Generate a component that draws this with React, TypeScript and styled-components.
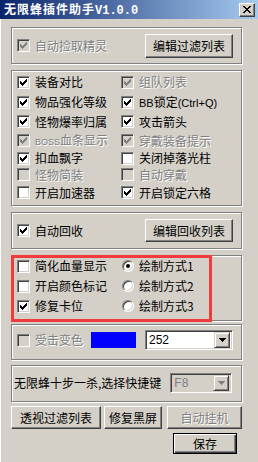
import React from "react";
import styled, { createGlobalStyle, css } from "styled-components";

const GlobalStyle = createGlobalStyle`
  html, body { margin: 0; padding: 0; background: #d4d0c8; }
  body {
    font-family: "Noto Sans CJK SC", "Liberation Sans", sans-serif;
    font-size: 12px;
  }
  * { box-sizing: border-box; }
`;

const BG = "#d4d0c8";

const Window = styled.div`
  width: 258px;
  height: 462px;
  background: ${BG};
  display: flex;
  flex-direction: column;
  overflow: hidden;
`;

const TitleBar = styled.div`
  height: 19px;
  flex: none;
  display: flex;
  align-items: center;
  justify-content: space-between;
  padding: 0 3px 0 4px;
  background: linear-gradient(to right, #0a246a, #a6caf0);
`;

const TitleText = styled.div`
  color: #fff;
  font-weight: bold;
  font-size: 12px;
  line-height: 19px;
  letter-spacing: 1px;
  white-space: nowrap;
`;

const Version = styled.span`
  font-family: "Liberation Mono", "DejaVu Sans Mono", monospace;
  letter-spacing: 0;
`;

const CloseButton = styled.div`
  width: 16px;
  height: 14px;
  display: flex;
  align-items: center;
  justify-content: center;
  background: ${BG};
  border: 1px solid;
  border-color: #fff #404040 #404040 #fff;
  box-shadow: inset -1px -1px #808080;
`;

const Body = styled.div`
  flex: 1;
  display: flex;
  flex-direction: column;
  align-items: flex-start;
  padding: 0 0 0 10px;
  border-left: 1px solid #fff;
`;

const GroupBox = styled.div<{ $h: number; $mt: number; $pt?: number; $pl?: number; $pr?: number }>`
  position: relative;
  width: 231px;
  height: ${(p) => p.$h}px;
  margin-top: ${(p) => p.$mt}px;
  padding: ${(p) => p.$pt ?? 0}px ${(p) => p.$pr ?? 8}px 0 ${(p) => p.$pl ?? 5}px;
  border: 1px solid #808080;
  box-shadow: inset 1px 1px #fff, 1px 1px #fff;
`;

const CenterRow = styled.div`
  height: 100%;
  display: flex;
  align-items: center;
  justify-content: space-between;
`;

const FixedRow = styled.div<{ $h: number }>`
  height: ${(p) => p.$h}px;
  display: flex;
  align-items: center;
`;

const OptionGrid = styled.div<{ $rows: string; $col: number }>`
  display: grid;
  grid-template-columns: ${(p) => p.$col}px 1fr;
  grid-template-rows: ${(p) => p.$rows};
  align-items: center;
`;

const Option = styled.label<{ $disabled?: boolean }>`
  display: flex;
  align-items: center;
  gap: 5px;
  font-size: 12px;
  line-height: 14px;
  white-space: nowrap;
  color: ${(p) => (p.$disabled ? "#808080" : "#000")};
  ${(p) =>
    p.$disabled &&
    css`
      text-shadow: 1px 1px #fff;
    `}
`;

const SmallLatin = styled.span`
  font-family: "Liberation Sans", sans-serif;
  font-size: 9px;
`;

const Latin = styled.span`
  font-family: "Liberation Sans", sans-serif;
  font-size: 11px;
`;

const Box = styled.span<{ $disabled?: boolean }>`
  flex: none;
  width: 13px;
  height: 13px;
  display: flex;
  align-items: center;
  justify-content: center;
  border: 1px solid;
  border-color: #808080 #fff #fff #808080;
  box-shadow: inset 1px 1px #404040, inset -1px -1px ${BG};
  background: ${(p) => (p.$disabled ? BG : "#fff")};
`;

const RadioCircle = styled.span<{ $checked?: boolean }>`
  flex: none;
  width: 12px;
  height: 12px;
  border-radius: 50%;
  display: flex;
  align-items: center;
  justify-content: center;
  border: 1px solid;
  border-color: #808080 #fff #fff #808080;
  box-shadow: inset 1px 1px #404040, inset -1px -1px ${BG};
  background: #fff;
  &::after {
    content: "";
    width: 4px;
    height: 4px;
    border-radius: 50%;
    background: #000;
    display: ${(p) => (p.$checked ? "block" : "none")};
  }
`;

const Button = styled.button<{ $w: number; $h: number; $default?: boolean }>`
  flex: none;
  width: ${(p) => p.$w}px;
  height: ${(p) => p.$h}px;
  padding: 0;
  font-family: "Noto Sans CJK SC", "Liberation Sans", sans-serif;
  font-size: 12px;
  line-height: 14px;
  color: #000;
  background: ${BG};
  border: 1px solid;
  border-color: #fff #404040 #404040 #fff;
  box-shadow: inset -1px -1px #808080;
  &:disabled {
    color: #808080;
    text-shadow: 1px 1px #fff;
  }
  ${(p) =>
    p.$default &&
    css`
      border-color: #000;
      box-shadow: inset 1px 1px #fff, inset -1px -1px #404040, inset -2px -2px #808080;
    `}
`;

const ColorSwatch = styled.div<{ $color: string }>`
  flex: none;
  width: 45px;
  height: 16px;
  background: ${(p) => p.$color};
`;

const Combo = styled.div<{ $w: number; $disabled?: boolean }>`
  flex: none;
  width: ${(p) => p.$w}px;
  height: 20px;
  display: flex;
  align-items: center;
  padding: 2px;
  border: 1px solid;
  border-color: #808080 #fff #fff #808080;
  box-shadow: inset 1px 1px #404040, inset -1px -1px ${BG};
  background: ${(p) => (p.$disabled ? BG : "#fff")};
`;

const ComboText = styled.span<{ $disabled?: boolean }>`
  flex: 1;
  padding-left: 1px;
  font-family: "Liberation Sans", sans-serif;
  font-size: 12px;
  line-height: 14px;
  color: ${(p) => (p.$disabled ? "#808080" : "#000")};
`;

const DropButton = styled.span`
  flex: none;
  width: 16px;
  height: 16px;
  display: flex;
  align-items: center;
  justify-content: center;
  border: 1px solid;
  border-color: ${BG} #404040 #404040 ${BG};
  box-shadow: inset 1px 1px #fff, inset -1px -1px #808080;
  background: ${BG};
`;

const PlainLabel = styled.span`
  font-size: 12px;
  line-height: 14px;
  white-space: nowrap;
  color: #000;
  padding-left: 1px;
`;

const ButtonRow = styled.div<{ $mt: number; $pl: number }>`
  display: flex;
  margin-top: ${(p) => p.$mt}px;
  padding-left: ${(p) => p.$pl}px;
`;

const Gap = styled.span<{ $w: number }>`
  flex: none;
  width: ${(p) => p.$w}px;
`;

const Highlight = styled.div`
  position: absolute;
  left: -1px;
  top: -1px;
  width: 201px;
  height: 67px;
  border: 3px solid #ef3b3b;
  pointer-events: none;
`;

const CHECK_COLS = [2, 3, 4, 3, 2, 1, 0];

function CheckMark({ color }: { color: string }) {
  return (
    <svg width="7" height="7" viewBox="0 0 7 7" shapeRendering="crispEdges">
      {CHECK_COLS.map((y, x) => (
        <rect key={x} x={x} y={y} width="1" height="3" fill={color} />
      ))}
    </svg>
  );
}

function Arrow({ color }: { color: string }) {
  return (
    <svg width="7" height="4" viewBox="0 0 7 4" shapeRendering="crispEdges">
      <path d="M0 0h7v1h-1v1h-1v1h-1v1h-1v-1h-1v-1h-1v-1h-1z" fill={color} />
    </svg>
  );
}

type Opt = { label: React.ReactNode; checked?: boolean; disabled?: boolean };

function Check({ label, checked, disabled }: Opt) {
  return (
    <Option $disabled={disabled}>
      <Box $disabled={disabled}>{checked && <CheckMark color={disabled ? "#808080" : "#000"} />}</Box>
      <span>{label}</span>
    </Option>
  );
}

function Radio({ label, checked }: { label: React.ReactNode; checked?: boolean }) {
  return (
    <Option>
      <RadioCircle $checked={checked} />
      <span>{label}</span>
    </Option>
  );
}

const featureOptions: Opt[] = [
  { label: "装备对比", checked: true },
  { label: "组队列表", checked: true, disabled: true },
  { label: "物品强化等级", checked: true },
  {
    label: (
      <>
        <Latin>BB</Latin>锁定<Latin>(Ctrl+Q)</Latin>
      </>
    ),
    checked: true,
  },
  { label: "怪物爆率归属", checked: true },
  { label: "攻击箭头", checked: true },
  {
    label: (
      <>
        <SmallLatin>BOSS</SmallLatin>血条显示
      </>
    ),
    checked: true,
    disabled: true,
  },
  { label: "穿戴装备提示", checked: true, disabled: true },
  { label: "扣血飘字", checked: true },
  { label: "关闭掉落光柱" },
  { label: "怪物简装", disabled: true },
  { label: "自动穿戴", disabled: true },
  { label: "开启加速器" },
  { label: "开启锁定六格", checked: true },
];

export default function App() {
  return (
    <>
      <GlobalStyle />
      <Window>
        <TitleBar>
          <TitleText>
            无限蜂插件助手<Version>V1.0.0</Version>
          </TitleText>
          <CloseButton>
            <svg width="8" height="7" viewBox="0 0 8 7" shapeRendering="crispEdges">
              <path d="M0 0h2v1h1v1h2v-1h1v-1h2v1h-1v1h-1v1h-1v1h1v1h1v1h1v1h-2v-1h-1v-1h-2v1h-1v1h-2v-1h1v-1h1v-1h1v-1h-1v-1h-1v-1h-1z" fill="#000" />
            </svg>
          </CloseButton>
        </TitleBar>
        <Body>
          <GroupBox $h={37} $mt={8}>
            <CenterRow>
              <Check label="自动捡取精灵" checked disabled />
              <Button $w={88} $h={24}>编辑过滤列表</Button>
            </CenterRow>
          </GroupBox>

          <GroupBox $h={136} $mt={6} $pt={1}>
            <OptionGrid $col={104} $rows="20px 20px 19px 19px 16px 17px 19px">
              {featureOptions.map((o, i) => (
                <Check key={i} {...o} />
              ))}
            </OptionGrid>
          </GroupBox>

          <GroupBox $h={37} $mt={6}>
            <CenterRow>
              <Check label="自动回收" checked />
              <Button $w={88} $h={23}>编辑回收列表</Button>
            </CenterRow>
          </GroupBox>

          <GroupBox $h={66} $mt={6}>
            <OptionGrid $col={105} $rows="20px 20px 20px">
              <Check label="简化血量显示" />
              <Radio label="绘制方式1" checked />
              <Check label="开启颜色标记" />
              <Radio label="绘制方式2" />
              <Check label="修复卡位" checked />
              <Radio label="绘制方式3" />
            </OptionGrid>
            <Highlight />
          </GroupBox>

          <GroupBox $h={36} $mt={3} $pt={5}>
            <FixedRow $h={20}>
              <Check label="受击变色" disabled />
              <Gap $w={8} />
              <ColorSwatch $color="#0000ff" />
              <Gap $w={9} />
              <Combo $w={88}>
                <ComboText>252</ComboText>
                <DropButton>
                  <Arrow color="#000" />
                </DropButton>
              </Combo>
            </FixedRow>
          </GroupBox>

          <GroupBox $h={37} $mt={5} $pt={6} $pl={1}>
            <FixedRow $h={21}>
              <PlainLabel>无限蜂十步一杀,选择快捷键</PlainLabel>
              <Gap $w={9} />
              <Combo $w={62} $disabled>
                <ComboText $disabled>F8</ComboText>
                <DropButton>
                  <Arrow color="#808080" />
                </DropButton>
              </Combo>
            </FixedRow>
          </GroupBox>

          <ButtonRow $mt={4} $pl={0}>
            <Button $w={90} $h={23}>透视过滤列表</Button>
            <Gap $w={3} />
            <Button $w={58} $h={23}>修复黑屏</Button>
            <Gap $w={5} />
            <Button $w={75} $h={23} disabled>
              自动挂机
            </Button>
          </ButtonRow>

          <ButtonRow $mt={4} $pl={162}>
            <Button $w={64} $h={21} $default>
              保存
            </Button>
          </ButtonRow>
        </Body>
      </Window>
    </>
  );
}
